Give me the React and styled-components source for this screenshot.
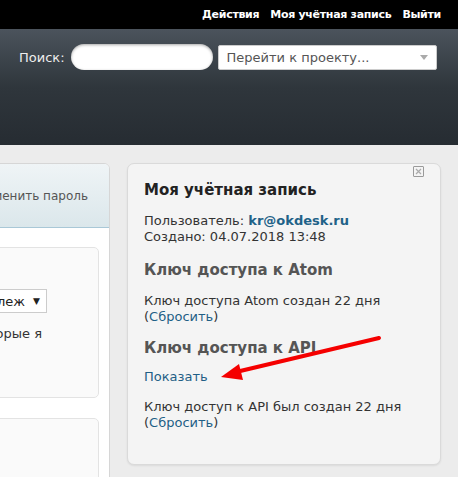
import React from "react";
import styled, { createGlobalStyle } from "styled-components";

const GlobalStyle = createGlobalStyle`
  html, body {
    margin: 0;
    padding: 0;
    background: #ececec;
    font-family: "DejaVu Sans", Verdana, sans-serif;
    overflow: hidden;
  }
`;

const Page = styled.div`
  position: relative;
  width: 458px;
  height: 477px;
  overflow: hidden;
  background: #ececec;
`;

const TopBar = styled.div`
  height: 29px;
  background: #000;
  display: flex;
  justify-content: flex-end;
  align-items: center;
  gap: 11px;
  padding-right: 17px;
`;

const TopLink = styled.a`
  color: #fff;
  font-family: "DejaVu Sans", Tahoma, sans-serif;
  font-weight: bold;
  font-size: 11px;
  letter-spacing: -0.3px;
  text-decoration: none;
`;

const Header = styled.div`
  height: 116px;
  background: linear-gradient(#4b535c 0%, #2f363c 50%, #262c32 100%);
  display: flex;
  align-items: flex-start;
  padding: 15px 0 0 19px;
  box-sizing: border-box;
`;

const SearchLabel = styled.label`
  color: #eee;
  font-size: 13px;
  margin-top: 6px;
  margin-right: 6px;
`;

const SearchInput = styled.div`
  width: 142px;
  height: 26px;
  border-radius: 13px;
  background: #fff;
  box-shadow: inset 0 1px 3px rgba(0, 0, 0, 0.35);
  margin-right: 5px;
`;

const ProjectSelect = styled.div`
  width: 219px;
  height: 25px;
  margin-top: 1px;
  background: #fff;
  border: 1px solid #ccc;
  border-radius: 2px;
  box-sizing: border-box;
  display: flex;
  align-items: center;
  justify-content: space-between;
  padding: 0 8px 0 8px;
  color: #555;
  font-size: 13px;
`;

const Caret = styled.span`
  width: 0;
  height: 0;
  border-left: 4px solid transparent;
  border-right: 4px solid transparent;
  border-top: 5px solid #aaa;
`;

const Content = styled.div`
  display: flex;
  gap: 17px;
  padding-top: 18px;
  margin-left: -192px;
`;

const LeftPanel = styled.div`
  width: 300px;
  flex-shrink: 0;
  height: 330px;
  background: #fff;
  border: 1px solid #d6d6d6;
  border-radius: 0 6px 0 0;
  overflow: hidden;
`;

const LeftTabs = styled.div`
  height: 63px;
  background: linear-gradient(#eff4f6, #dbe7eb);
  border-bottom: 1px solid #a9c8d7;
  display: flex;
  justify-content: flex-end;
  align-items: center;
  padding-right: 21px;
  color: #555;
  font-size: 12px;
  white-space: nowrap;
`;

const LeftBody = styled.div`
  padding: 19px 10px 0 10px;
  display: flex;
  flex-direction: column;
  gap: 20px;
`;

const InnerBox = styled.div`
  height: ${(p) => p.$height}px;
  background: #fafafa;
  border: 1px solid #e3e3e3;
  border-radius: 5px;
  box-sizing: border-box;
  padding: 41px 51px 0 0;
  display: flex;
  flex-direction: column;
  align-items: flex-end;
`;

const MiniSelect = styled.div`
  width: 150px;
  height: 24px;
  border: 1px solid #ccc;
  background: #fff;
  box-sizing: border-box;
  display: flex;
  align-items: center;
  justify-content: flex-end;
  gap: 8px;
  padding-right: 6px;
  font-size: 13px;
  color: #222;
  white-space: nowrap;
  overflow: hidden;
`;

const SmallTri = styled.span`
  font-size: 9px;
  color: #222;
`;

const BoxText = styled.p`
  margin: 13px 5px 0 0;
  font-size: 13px;
  color: #333;
  white-space: nowrap;
`;

const Card = styled.div`
  position: relative;
  width: 314px;
  height: 302px;
  flex-shrink: 0;
  box-sizing: border-box;
  background: #f4f4f4;
  border: 1px solid #dadada;
  border-radius: 7px;
  box-shadow: 0 1px 2px rgba(0, 0, 0, 0.08);
  padding: 16px 16px 0 16px;
  color: #333;
  font-size: 13px;
  line-height: 16px;
`;

const CloseBox = styled.span`
  position: absolute;
  top: 2px;
  right: 16px;
  width: 9px;
  height: 9px;
  border: 1px solid #9a9a9a;
  border-radius: 1px;
  display: flex;
  align-items: center;
  justify-content: center;
  color: #999;
`;

const Title = styled.h2`
  margin: 0 0 13px;
  font-size: 15px;
  line-height: 20px;
  font-weight: bold;
  color: ${(p) => (p.$muted ? "#555" : "#222")};
`;

const SubTitle = styled(Title)`
  margin: ${(p) => p.$mt}px 0 ${(p) => p.$mb}px;
`;

const Line = styled.div`
  margin: 0;
`;

const Para = styled.p`
  margin: ${(p) => p.$mt || 0}px 0 0;
`;

const Strong = styled.a`
  font-weight: bold;
  color: #1f6288;
  text-decoration: none;
`;

const Link = styled.a`
  color: #1f5f86;
  text-decoration: none;
`;

const ArrowOverlay = styled.svg`
  position: absolute;
  left: 0;
  top: 0;
  pointer-events: none;
`;

export default function App() {
  return (
    <>
      <GlobalStyle />
      <Page>
        <TopBar>
          <TopLink href="#">Действия</TopLink>
          <TopLink href="#">Моя учётная запись</TopLink>
          <TopLink href="#">Выйти</TopLink>
        </TopBar>
        <Header>
          <SearchLabel>Поиск:</SearchLabel>
          <SearchInput />
          <ProjectSelect>
            <span>Перейти к проекту...</span>
            <Caret />
          </ProjectSelect>
        </Header>
        <Content>
          <LeftPanel>
            <LeftTabs>Изменить пароль</LeftTabs>
            <LeftBody>
              <InnerBox $height={151}>
                <MiniSelect>
                  Принадлеж <SmallTri>▼</SmallTri>
                </MiniSelect>
                <BoxText>Задачи, которые я</BoxText>
              </InnerBox>
              <InnerBox $height={120} />
            </LeftBody>
          </LeftPanel>
          <Card>
            <CloseBox>
              <svg width="7" height="7" viewBox="0 0 7 7">
                <path d="M1 1 L6 6 M6 1 L1 6" stroke="#aaa" strokeWidth="1.2" />
              </svg>
            </CloseBox>
            <Title>Моя учётная запись</Title>
            <Line>
              Пользователь: <Strong href="#">kr@okdesk.ru</Strong>
            </Line>
            <Line>Создано: 04.07.2018 13:48</Line>
            <SubTitle $muted $mt={15} $mb={13}>
              Ключ доступа к Atom
            </SubTitle>
            <Para>
              Ключ доступа Atom создан 22 дня
              <br />(<Link href="#">Сбросить</Link>)
            </Para>
            <SubTitle $muted $mt={13} $mb={11}>
              Ключ доступа к API
            </SubTitle>
            <Para>
              <Link href="#">Показать</Link>
            </Para>
            <Para $mt={14}>
              Ключ доступ к API был создан 22 дня
              <br />(<Link href="#">Сбросить</Link>)
            </Para>
          </Card>
        </Content>
        <ArrowOverlay width="458" height="477" viewBox="0 0 458 477">
          <path d="M379 338 L236 372" stroke="#f50000" strokeWidth="4" strokeLinecap="round" />
          <path d="M221 377 L239 364 L243 380 Z" fill="#f50000" />
        </ArrowOverlay>
      </Page>
    </>
  );
}
